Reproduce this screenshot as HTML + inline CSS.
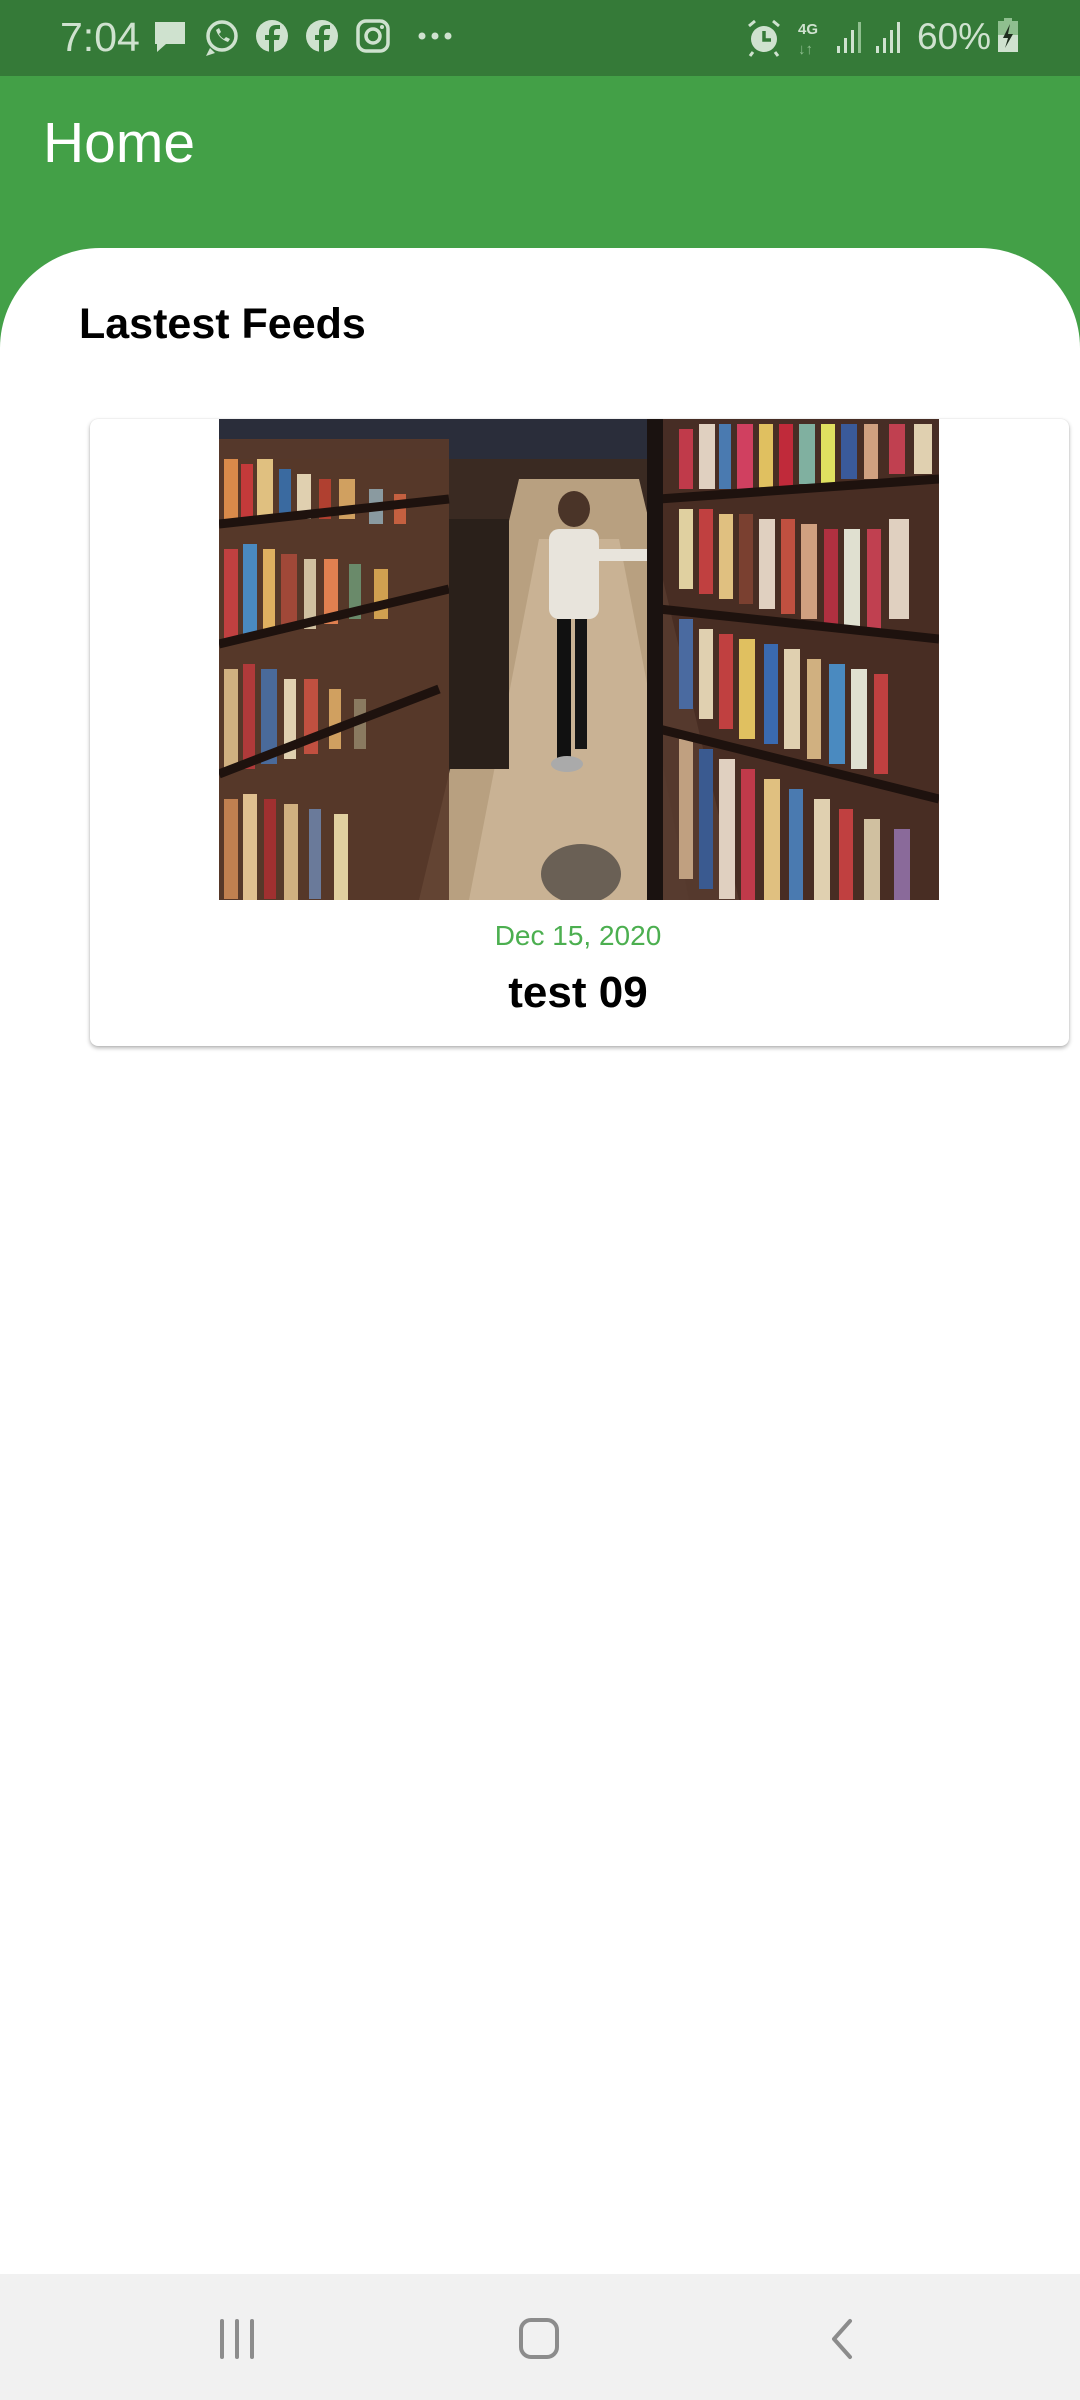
<!DOCTYPE html>
<html><head><meta charset="utf-8"><style>
*{margin:0;padding:0;box-sizing:border-box}
body{width:1080px;height:2400px;position:relative;background:#fff;font-family:"Liberation Sans",Roboto,sans-serif;overflow:hidden}
.sb{position:absolute;left:0;top:0;width:1080px;height:76px;background:#357a38;color:#cfe2cf}
.ab{position:absolute;left:0;top:76px;width:1080px;height:280px;background:#43a047}
.home{position:absolute;left:43px;top:110px;color:#fff;font-size:57px}
.panel{position:absolute;left:0;top:248px;width:1080px;height:2030px;background:#fff;border-radius:100px 100px 0 0}
.panel2{position:absolute;left:0;top:350px;width:1080px;height:100px;background:#fff}
.lf{position:absolute;left:79px;top:300px;font-size:43px;font-weight:bold;color:#000}
.card{position:absolute;left:90px;top:419px;width:979px;height:627px;background:#fff;border-radius:8px;box-shadow:0 2px 4px rgba(0,0,0,.3),0 0 1px rgba(0,0,0,.15)}
.img{position:absolute;left:219px;top:419px;width:720px;height:481px;overflow:hidden}
.date{position:absolute;left:0;width:1156px;top:920px;text-align:center;color:#4caf50;font-size:28px}
.title{position:absolute;left:0;width:1156px;top:968px;text-align:center;color:#000;font-size:44px;font-weight:bold}
.nav{position:absolute;left:0;top:2274px;width:1080px;height:126px;background:#f1f1f1}
</style></head><body>
<div class="sb">
 <div style="position:absolute;left:60px;top:14px;font-size:41px">7:04</div>
 <svg style="position:absolute;left:150px;top:18px" width="320" height="40" viewBox="0 0 320 40" fill="#cfe2cf">
  <path d="M5 4h30v22H16l-9 8v-8H5z"/>
  <circle cx="72" cy="18" r="14" fill="none" stroke="#cfe2cf" stroke-width="3.5"/><path d="M60 30l-4 8 9-3z"/><path d="M66 12c2 6 6 10 12 12l2-3-4-2-2 2c-2-1-4-3-5-5l2-2-2-4z"/>
  <circle cx="122" cy="18" r="16"/><path d="M124 36V22h5l1-5h-6v-3c0-2 1-3 3-3h3V7h-4c-5 0-7 3-7 7v3h-4v5h4v14z" fill="#357a38"/>
  <circle cx="172" cy="18" r="16"/><path d="M174 36V22h5l1-5h-6v-3c0-2 1-3 3-3h3V7h-4c-5 0-7 3-7 7v3h-4v5h4v14z" fill="#357a38"/>
  <rect x="208" y="3" width="30" height="30" rx="8" fill="none" stroke="#cfe2cf" stroke-width="3.5"/><circle cx="223" cy="18" r="7" fill="none" stroke="#cfe2cf" stroke-width="3.5"/><circle cx="232" cy="9" r="2"/>
  <circle cx="272" cy="18" r="3.5"/><circle cx="285" cy="18" r="3.5"/><circle cx="298" cy="18" r="3.5"/>
 </svg>
 <svg style="position:absolute;left:745px;top:18px" width="170" height="40" viewBox="0 0 170 40">
  <circle cx="19" cy="21" r="13" fill="#cfe2cf"/><path d="M19 13v9h7" stroke="#357a38" stroke-width="3.5" fill="none"/><path d="M4 8l6-5M34 8l-6-5M8 34l-3 4M30 34l3 4" stroke="#cfe2cf" stroke-width="3"/>
  <text x="53" y="16" font-size="15" font-weight="bold" fill="#cfe2cf" font-family="Liberation Sans">4G</text>
  <text x="53" y="36" font-size="15" font-weight="bold" fill="#8fbf8f" font-family="Liberation Sans">↓↑</text>
  <g fill="#cfe2cf"><rect x="92" y="28" width="3" height="7"/><rect x="99" y="20" width="3" height="15"/><rect x="106" y="12" width="3" height="23"/></g><rect x="113" y="4" width="3" height="31" fill="#8fbf8f"/>
  <g fill="#cfe2cf"><rect x="131" y="28" width="3" height="7"/><rect x="138" y="20" width="3" height="15"/><rect x="145" y="12" width="3" height="23"/><rect x="152" y="4" width="3" height="31"/></g>
 </svg>
 <div style="position:absolute;left:917px;top:16px;font-size:37px">60%</div>
 <svg style="position:absolute;left:997px;top:18px" width="24" height="36" viewBox="0 0 24 36"><rect x="7" y="0" width="8" height="4" fill="#8fbf8f"/><rect x="1" y="3" width="20" height="14" fill="#8fbf8f"/><rect x="1" y="17" width="20" height="17" fill="#cfe2cf"/><path d="M13 6l-7 14h5l-3 10 8-14h-5z" fill="#1e2e1e"/></svg>
</div>
<div class="ab"></div>
<div class="home">Home</div>
<div class="panel"></div><div class="panel2"></div>
<div class="lf">Lastest Feeds</div>
<div class="card"></div>
<div class="img">
<svg width="720" height="481" viewBox="0 0 720 481">
 <rect width="720" height="481" fill="#3a2a22"/>
 <rect x="0" y="0" width="720" height="40" fill="#2a2d3a"/>
 <polygon points="200,481 300,60 420,60 520,481" fill="#b8a080"/>
 <polygon points="250,481 320,120 400,120 470,481" fill="#c9b294"/>
 <g opacity=".9">
  <rect x="0" y="20" width="230" height="461" fill="#5a3a2a"/>
  <rect x="440" y="0" width="280" height="481" fill="#4a2e24"/>
 </g>
 <g>
  <rect x="5" y="40" width="14" height="60" fill="#d98a4a"/><rect x="22" y="45" width="12" height="55" fill="#c43a3a"/><rect x="38" y="40" width="16" height="60" fill="#e0c080"/><rect x="60" y="50" width="12" height="50" fill="#3a6aa0"/><rect x="78" y="55" width="14" height="45" fill="#e0d0b0"/><rect x="100" y="60" width="12" height="40" fill="#b04030"/><rect x="120" y="60" width="16" height="40" fill="#d0a060"/><rect x="150" y="70" width="14" height="35" fill="#8a9aa0"/><rect x="175" y="75" width="12" height="30" fill="#c46040"/>
  <rect x="5" y="130" width="14" height="90" fill="#c04040"/><rect x="24" y="125" width="14" height="90" fill="#4a8ac0"/><rect x="44" y="130" width="12" height="80" fill="#e0b060"/><rect x="62" y="135" width="16" height="75" fill="#a04838"/><rect x="85" y="140" width="12" height="70" fill="#d0c0a0"/><rect x="105" y="140" width="14" height="65" fill="#e08050"/><rect x="130" y="145" width="12" height="55" fill="#6a8a6a"/><rect x="155" y="150" width="14" height="50" fill="#d0a050"/>
  <rect x="5" y="250" width="14" height="100" fill="#d0b080"/><rect x="24" y="245" width="12" height="105" fill="#b03a3a"/><rect x="42" y="250" width="16" height="95" fill="#4a6a9a"/><rect x="65" y="260" width="12" height="80" fill="#e0d0b0"/><rect x="85" y="260" width="14" height="75" fill="#c05040"/><rect x="110" y="270" width="12" height="60" fill="#d0a060"/><rect x="135" y="280" width="12" height="50" fill="#8a7a60"/>
  <rect x="5" y="380" width="14" height="100" fill="#c08050"/><rect x="24" y="375" width="14" height="106" fill="#e0c090"/><rect x="45" y="380" width="12" height="100" fill="#a03030"/><rect x="65" y="385" width="14" height="96" fill="#d0b080"/><rect x="90" y="390" width="12" height="90" fill="#6a7a9a"/><rect x="115" y="395" width="14" height="86" fill="#e0d0a0"/>
 </g>
 <g>
  <rect x="460" y="10" width="14" height="60" fill="#c03a4a"/><rect x="480" y="5" width="16" height="65" fill="#e0d0c0"/><rect x="500" y="5" width="12" height="65" fill="#4a7ab0"/><rect x="518" y="5" width="16" height="65" fill="#d04060"/><rect x="540" y="5" width="14" height="65" fill="#e0c060"/><rect x="560" y="5" width="14" height="65" fill="#c02a3a"/><rect x="580" y="5" width="16" height="60" fill="#80b0a0"/><rect x="602" y="5" width="14" height="60" fill="#e0e060"/><rect x="622" y="5" width="16" height="55" fill="#3a5a9a"/><rect x="645" y="5" width="14" height="55" fill="#d0a080"/><rect x="670" y="5" width="16" height="50" fill="#c04050"/><rect x="695" y="5" width="18" height="50" fill="#e0d0b0"/>
  <rect x="460" y="90" width="14" height="80" fill="#e0d0a0"/><rect x="480" y="90" width="14" height="85" fill="#c04040"/><rect x="500" y="95" width="14" height="85" fill="#e0c080"/><rect x="520" y="95" width="14" height="90" fill="#7a4030"/><rect x="540" y="100" width="16" height="90" fill="#e0d0c0"/><rect x="562" y="100" width="14" height="95" fill="#c05040"/><rect x="582" y="105" width="16" height="95" fill="#d0a080"/><rect x="605" y="110" width="14" height="100" fill="#b03040"/><rect x="625" y="110" width="16" height="100" fill="#e0e0d0"/><rect x="648" y="110" width="14" height="100" fill="#c04050"/><rect x="670" y="100" width="20" height="100" fill="#e0d0c0"/>
  <rect x="460" y="200" width="14" height="90" fill="#4a6aa0"/><rect x="480" y="210" width="14" height="90" fill="#e0d0b0"/><rect x="500" y="215" width="14" height="95" fill="#c04040"/><rect x="520" y="220" width="16" height="100" fill="#e0c060"/><rect x="545" y="225" width="14" height="100" fill="#3a6ab0"/><rect x="565" y="230" width="16" height="100" fill="#e0d0b0"/><rect x="588" y="240" width="14" height="100" fill="#d0b080"/><rect x="610" y="245" width="16" height="100" fill="#4a8ac0"/><rect x="632" y="250" width="16" height="100" fill="#e0e0d0"/><rect x="655" y="255" width="14" height="100" fill="#c04040"/>
  <rect x="460" y="320" width="14" height="140" fill="#c0a080"/><rect x="480" y="330" width="14" height="140" fill="#3a5a90"/><rect x="500" y="340" width="16" height="140" fill="#e0d0c0"/><rect x="522" y="350" width="14" height="131" fill="#c03a4a"/><rect x="545" y="360" width="16" height="121" fill="#e0c080"/><rect x="570" y="370" width="14" height="111" fill="#4a7ab0"/><rect x="595" y="380" width="16" height="101" fill="#e0d0b0"/><rect x="620" y="390" width="14" height="91" fill="#c04040"/><rect x="645" y="400" width="16" height="81" fill="#d0c0a0"/><rect x="675" y="410" width="16" height="71" fill="#8a6a9a"/>
 </g>
 <g stroke="#1e120e" stroke-width="9"><line x1="0" y1="105" x2="230" y2="80"/><line x1="0" y1="225" x2="230" y2="170"/><line x1="0" y1="355" x2="220" y2="270"/><line x1="440" y1="80" x2="720" y2="60"/><line x1="440" y1="190" x2="720" y2="220"/><line x1="440" y1="310" x2="720" y2="380"/></g>
 <rect x="428" y="0" width="16" height="481" fill="#1a1210"/>
 <rect x="230" y="100" width="60" height="250" fill="#2a201a"/>
 <g><ellipse cx="355" cy="90" rx="16" ry="18" fill="#4a3428"/><rect x="330" y="110" width="50" height="90" rx="10" fill="#e8e4dc"/><rect x="338" y="200" width="14" height="140" fill="#111"/><rect x="356" y="200" width="12" height="130" fill="#151515"/><ellipse cx="348" cy="345" rx="16" ry="8" fill="#aaa"/><rect x="378" y="130" width="50" height="12" fill="#e8e4dc"/></g>
 <ellipse cx="362" cy="455" rx="40" ry="30" fill="#6a6055"/>
</svg>
</div>
<div class="date">Dec 15, 2020</div>
<div class="title">test 09</div>
<div class="nav">
 <svg style="position:absolute;left:218px;top:44px" width="42" height="42" viewBox="0 0 42 42"><g stroke="#8c8c8c" stroke-width="4" stroke-linecap="round"><line x1="4" y1="3" x2="4" y2="39"/><line x1="19" y1="3" x2="19" y2="39"/><line x1="34" y1="3" x2="34" y2="39"/></g></svg>
 <div style="position:absolute;left:519px;top:44px;width:40px;height:41px;border:4px solid #8c8c8c;border-radius:12px"></div>
 <svg style="position:absolute;left:828px;top:44px" width="30" height="42" viewBox="0 0 30 42"><path d="M22 3L6 21l16 18" stroke="#8c8c8c" stroke-width="4" fill="none" stroke-linecap="round" stroke-linejoin="round"/></svg>
</div>
</body></html>
